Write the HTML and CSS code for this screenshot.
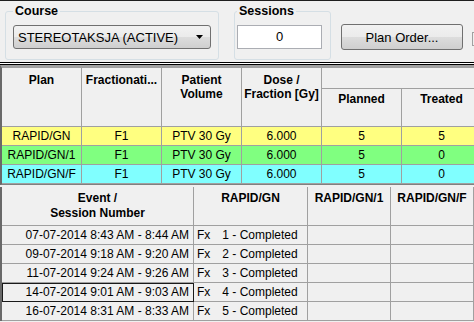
FILE: index.html
```html
<!DOCTYPE html>
<html lang="en">
<head>
    <meta charset="UTF-8">
    <meta name="viewport" content="width=device-width, initial-scale=1.0">
    <link rel="stylesheet" href="styles.css">
</head>
<body>
    <div class="top">
        <fieldset class="group group-course">
            <legend>Course</legend>
            <div class="combo">
                <span>STEREOTAKSJA (ACTIVE)</span>
                <svg class="combo-arrow" width="7" height="4" viewBox="0 0 7 4">
                    <polygon points="0 0, 7 0, 3.5 4" fill="#000" />
                </svg>
            </div>
        </fieldset>
        <fieldset class="group group-sessions">
            <legend>Sessions</legend>
            <div class="field">0</div>
        </fieldset>
        <button class="btn">Plan Order...</button>
        <div class="btn-stub"></div>
    </div>
    <div class="split"></div>

    <div class="grid plans">
        <table>
            <colgroup>
                <col class="w80"><col class="w80"><col class="w80"><col class="w80"><col class="w80"><col class="w80">
            </colgroup>
            <tr class="head1">
                <th rowspan="2">Plan</th>
                <th rowspan="2">Fractionati...</th>
                <th rowspan="2">Patient<br>Volume</th>
                <th rowspan="2">Dose /<br>Fraction [Gy]</th>
                <th colspan="2"></th>
            </tr>
            <tr class="head2">
                <th>Planned</th>
                <th>Treated</th>
            </tr>
            <tr class="row yellow">
                <td>RAPID/GN</td><td>F1</td><td>PTV 30 Gy</td><td>6.000</td><td>5</td><td>5</td>
            </tr>
            <tr class="row green">
                <td>RAPID/GN/1</td><td>F1</td><td>PTV 30 Gy</td><td>6.000</td><td>5</td><td>0</td>
            </tr>
            <tr class="row cyan">
                <td>RAPID/GN/F</td><td>F1</td><td>PTV 30 Gy</td><td>6.000</td><td>5</td><td>0</td>
            </tr>
        </table>
    </div>

    <div class="grid events">
        <table>
            <colgroup>
                <col class="w192"><col class="w114"><col class="w83"><col class="w83">
            </colgroup>
            <tr class="head">
                <th>Event /<br>Session Number</th>
                <th>RAPID/GN</th>
                <th>RAPID/GN/1</th>
                <th>RAPID/GN/F</th>
            </tr>
            <tr class="row">
                <td class="when">07-07-2014 8:43 AM - 8:44 AM</td>
                <td class="fx">Fx<span class="state">1 - Completed</span></td><td></td><td></td>
            </tr>
            <tr class="row">
                <td class="when">09-07-2014 9:18 AM - 9:20 AM</td>
                <td class="fx">Fx<span class="state">2 - Completed</span></td><td></td><td></td>
            </tr>
            <tr class="row">
                <td class="when">11-07-2014 9:24 AM - 9:26 AM</td>
                <td class="fx">Fx<span class="state">3 - Completed</span></td><td></td><td></td>
            </tr>
            <tr class="row">
                <td class="when focus">14-07-2014 9:01 AM - 9:03 AM</td>
                <td class="fx">Fx<span class="state">4 - Completed</span></td><td></td><td></td>
            </tr>
            <tr class="row">
                <td class="when">16-07-2014 8:31 AM - 8:33 AM</td>
                <td class="fx">Fx<span class="state">5 - Completed</span></td><td></td><td></td>
            </tr>
        </table>
    </div>
</body>
</html>
```

FILE: styles.css
```css
body {
    margin: 0;
    width: 474px;
    height: 322px;
    overflow: hidden;
    background: #f0f0f0;
    font-family: "Liberation Sans", Arial, sans-serif;
    font-size: 13px;
    color: #000;
}

/* top toolbar */
.top {
    display: flex;
    align-items: flex-start;
    height: 62px;
    box-sizing: border-box;
    border-top: 1px solid #1e1e1e;
    padding: 3px 0 0 5px;
    overflow: hidden;
}
.top > * {
    flex: none;
}
.group {
    margin: 0;
    height: 56px;
    box-sizing: border-box;
    border: 1px solid #d5dfe5;
    border-radius: 3px;
}
.group legend {
    font-weight: bold;
    font-size: 12.5px;
    line-height: 14px;
    padding: 0 2px;
}
.group-course {
    width: 214px;
    padding: 7px 7px 0;
}
.group-sessions {
    width: 97px;
    margin-left: 15px;
    padding: 7px 2px 0;
}
.combo {
    display: flex;
    align-items: center;
    justify-content: space-between;
    width: 198px;
    height: 24px;
    box-sizing: border-box;
    border: 1px solid #707070;
    border-radius: 3px;
    padding: 0 7px 0 4px;
    background: linear-gradient(#f2f2f2, #ebebeb 50%, #dddddd 50%, #cfcfcf);
}
.field {
    width: 85px;
    height: 24px;
    box-sizing: border-box;
    border: 1px solid #abadb3;
    background: #fff;
    text-align: center;
    line-height: 22px;
}
.btn {
    margin: 20px 0 0 10px;
    width: 122px;
    height: 26px;
    border: 1px solid #707070;
    border-radius: 3px;
    background: linear-gradient(#f2f2f2, #ebebeb 50%, #dddddd 50%, #cfcfcf);
    font-family: inherit;
    font-size: 13px;
    color: #000;
    padding: 0;
}
.btn-stub {
    margin: 28px 0 0 9px;
    width: 10px;
    height: 12px;
    border: 1px solid #a0a0a0;
    border-right: none;
}

/* splitter between toolbar and grids */
.split {
    height: 1px;
    background: #fff;
    border-top: 1px solid #000;
    border-bottom: 1px solid #000;
}

/* grids */
.grid {
    border-left: 2px solid #696969;
    overflow: hidden;
}
.plans {
    border-top: 3px solid #a0a0a0;
    border-bottom: 1px solid #808080;
}
.events {
    margin-top: 2px;
}
table {
    border-collapse: separate;
    border-spacing: 0;
    table-layout: fixed;
}
.plans table { width: 480px; }
.events table { width: 472px; }
.w80 { width: 80px; }
.w192 { width: 192px; }
.w114 { width: 114px; }
.w83 { width: 83px; }

th, td {
    padding: 0;
    border-right: 1px solid #a0a0a0;
    border-bottom: 1px solid #a0a0a0;
    white-space: nowrap;
    overflow: hidden;
    font-size: 12px;
}
th {
    background: #f0f0f0;
    font-weight: bold;
    vertical-align: top;
    line-height: 14px;
    padding-top: 5px;
}
.head1 { height: 21px; }
.head2 { height: 38px; }
.head2 th { padding-top: 3px; }
.row { height: 19px; }
.row td {
    line-height: 18px;
    text-align: center;
}
.yellow { background: #ffff80; }
.green { background: #80ff80; }
.cyan { background: #80ffff; }

.events .head { height: 39px; }
.events .head th {
    line-height: 15px;
    padding-top: 4px;
}
.events td { background: #f0f0f0; }
.events .row td.when {
    text-align: right;
    padding-right: 4px;
}
.events .row td.fx {
    text-align: left;
    padding-left: 3px;
}
.state { margin-left: 12px; }
.focus {
    outline: 1px solid #1a1a1a;
    outline-offset: -1px;
}
```
